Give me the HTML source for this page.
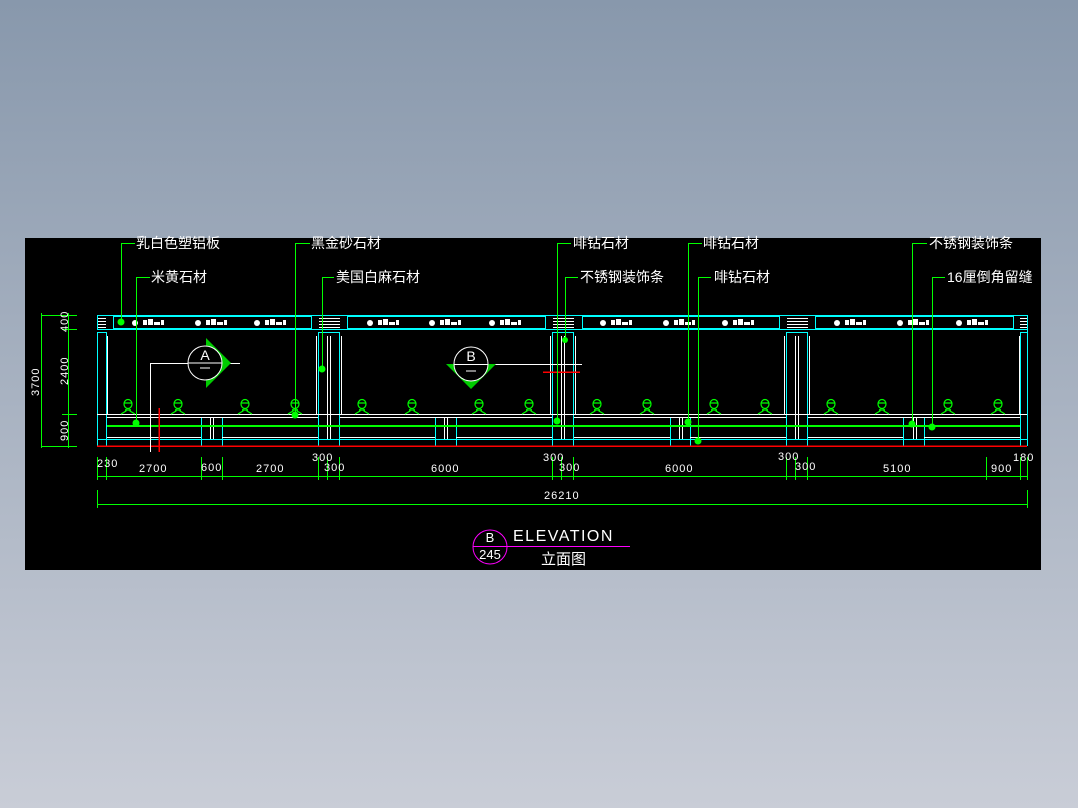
<!DOCTYPE html>
<html><head><meta charset="utf-8"><style>
html,body{margin:0;padding:0;width:1078px;height:808px;overflow:hidden;background:linear-gradient(#8898ac,#c9cdd7);}
svg{position:absolute;left:0;top:0}
text{font-family:"Liberation Sans","Noto Sans CJK SC",sans-serif;fill:#fff}
.c{shape-rendering:crispEdges}
</style></head><body>
<svg width="1078" height="808" viewBox="0 0 1078 808">
<defs>
<g id="p" fill="none" stroke="#0f0" stroke-width="1.2"><ellipse cx="0" cy="-10" rx="4" ry="4.5"/><path d="M-2 -5 L-2 -3 L-7 0 M2 -5 L2 -3 L7 0 M-3 -4 L3 -4 M-4 -11 H4"/></g>
<g id="o"><circle cx="0" cy="0" r="3" fill="#fff"/><rect x="8" y="-3" width="4" height="5" fill="#fff"/><rect x="13" y="-4" width="5" height="6" fill="#fff"/><rect x="19" y="-1" width="6" height="3" fill="#fff"/><rect x="26" y="-3" width="3" height="5" fill="#fff"/></g>
</defs>
<rect x="25" y="238" width="1016" height="332" fill="#000"/>
<g fill="none" stroke-width="1" class="c">
<rect x="97.5" y="315.5" width="930" height="14" stroke="#0ff"/>
<rect x="113.5" y="316.5" width="198" height="12" stroke="#0ff"/>
<rect x="347.5" y="316.5" width="198" height="12" stroke="#0ff"/>
<rect x="582.5" y="316.5" width="197" height="12" stroke="#0ff"/>
<rect x="815.5" y="316.5" width="198" height="12" stroke="#0ff"/>
<path stroke="#fff" d="M98 318.5h8M98 321.5h8M98 324.5h8M98 327.5h8 M319 318.5h21M319 321.5h21M319 324.5h21M319 327.5h21 M553 318.5h21M553 321.5h21M553 324.5h21M553 327.5h21 M787 318.5h21M787 321.5h21M787 324.5h21M787 327.5h21 M1020 318.5h7M1020 321.5h7M1020 324.5h7M1020 327.5h7"/>
<path stroke="#0ff" d="M97.5 332V446 M97.5 332.5H106 M106.5 332V414 M318.5 332V446M339.5 332V446M318 332.5H340 M552.5 332V446M573.5 332V446M552 332.5H574 M786.5 332V446M807.5 332V446M786 332.5H808 M1020.5 332V446M1027.5 315V446M1020 332.5H1027"/>
<path stroke="#fff" d="M107.5 336V414 M316.5 336V414 M341.5 336V414 M327.5 336V439 M330.5 336V439 M550.5 336V414 M575.5 336V414 M561.5 336V439 M564.5 336V439 M784.5 336V414 M809.5 336V414 M795.5 336V439 M798.5 336V439 M1019.5 336V414"/>
<path stroke="#0ff" d="M97 414.5H1027 M97 439.5H1027 M106.5 414V446 M201.5 417V446 M222.5 417V446 M435.5 417V446 M456.5 417V446 M670.5 417V446 M690.5 417V446 M903.5 417V446 M924.5 417V446"/>
<path stroke="#fff" d="M107 417.5H318 M340 417.5H552 M574 417.5H786 M808 417.5H1020 M107 437.5H201 M222 437.5H318 M340 437.5H435 M456 437.5H552 M574 437.5H670 M690 437.5H786 M808 437.5H903 M924 437.5H1020 M210.5 417V439M213.5 417V439M444.5 417V439M447.5 417V439M679.5 417V439M682.5 417V439M913.5 417V439M916.5 417V439 M97 414.5H1027"/>
<path stroke="#0f0" stroke-width="2" d="M107 426H1020"/>
<path stroke="#f00" stroke-width="1.5" d="M97 446H1027 M159 408V452 M543 372H580"/>
<path stroke="#fff" d="M150.5 363V452 M150 363.5H240 M465 364.5H582"/>
</g>
<g>
<use href="#o" x="135" y="323"/><use href="#o" x="198" y="323"/><use href="#o" x="257" y="323"/>
<use href="#o" x="370" y="323"/><use href="#o" x="432" y="323"/><use href="#o" x="492" y="323"/>
<use href="#o" x="603" y="323"/><use href="#o" x="666" y="323"/><use href="#o" x="725" y="323"/>
<use href="#o" x="837" y="323"/><use href="#o" x="900" y="323"/><use href="#o" x="959" y="323"/>
</g>
<g>
<use href="#p" x="128" y="414"/><use href="#p" x="178" y="414"/><use href="#p" x="245" y="414"/><use href="#p" x="295" y="414"/>
<use href="#p" x="362" y="414"/><use href="#p" x="412" y="414"/><use href="#p" x="479" y="414"/><use href="#p" x="529" y="414"/>
<use href="#p" x="597" y="414"/><use href="#p" x="647" y="414"/><use href="#p" x="714" y="414"/><use href="#p" x="765" y="414"/>
<use href="#p" x="831" y="414"/><use href="#p" x="882" y="414"/><use href="#p" x="948" y="414"/><use href="#p" x="998" y="414"/>
</g>
<polygon points="206,338 231,363 206,388" fill="#0c0"/>
<circle cx="205" cy="363" r="17" fill="#000" stroke="#fff"/>
<path d="M188 363H222 M200 368H210" stroke="#fff"/>
<text x="205" y="360" font-size="14" text-anchor="middle">A</text>
<polygon points="446,364 471,389 496,364" fill="#0c0"/>
<circle cx="471" cy="364" r="17" fill="#000" stroke="#fff"/>
<path d="M454 364.5H488 M466 371H476" stroke="#fff"/>
<text x="471" y="361" font-size="14" text-anchor="middle">B</text>
<g stroke="#0f0" fill="none" class="c">
<path d="M121.5 322V243.5H135 M136.5 423V277.5H150 M295.5 415V243.5H310 M322.5 369V277.5H334 M557.5 421V243.5H571 M565.5 340V277.5H578 M688.5 422V243.5H702 M698.5 441V277.5H711 M912.5 424V243.5H927 M932.5 427V277.5H945"/>
</g>
<g fill="#0f0"><circle cx="121" cy="322" r="3.5"/><circle cx="136" cy="423" r="3.5"/><circle cx="295" cy="415" r="3.5"/><circle cx="322" cy="369" r="3.5"/><circle cx="557" cy="421" r="3.5"/><circle cx="565" cy="340" r="3"/><circle cx="688" cy="422" r="3.5"/><circle cx="698" cy="441" r="3.5"/><circle cx="912" cy="424" r="3.5"/><circle cx="932" cy="427" r="3.5"/></g>
<g font-size="14">
<text x="136" y="248">乳白色塑铝板</text><text x="151" y="282">米黄石材</text>
<text x="311" y="248">黑金砂石材</text><text x="336" y="282">美国白麻石材</text>
<text x="573" y="248">啡钻石材</text><text x="580" y="282">不锈钢装饰条</text>
<text x="703" y="248">啡钻石材</text><text x="714" y="282">啡钻石材</text>
<text x="929" y="248">不锈钢装饰条</text><text x="947" y="282">16厘倒角留缝</text>
</g>
<g stroke="#0f0" fill="none" class="c">
<path d="M41 315.5H73 M41 446.5H73 M62 315.5H77 M62 329.5H77 M62 414.5H77 M62 446.5H77 M41.5 313V448"/>
<path d="M68.5 313V448"/>
<path d="M97 476.5H1027 M97.5 457V480 M106.5 457V480 M201.5 457V480 M222.5 457V480 M318.5 457V480 M327.5 457V480 M339.5 457V480 M552.5 457V480 M561.5 457V480 M573.5 457V480 M786.5 457V480 M795.5 457V480 M807.5 457V480 M986.5 457V480 M1020.5 457V480 M1027.5 457V480"/>
<path d="M97 504.5H1027 M97.5 490V508 M1027.5 490V508"/>
</g>
<g font-size="11" style="letter-spacing:1px">
<text transform="translate(39,396) rotate(-90)">3700</text>
<text transform="translate(68,332) rotate(-90)">400</text>
<text transform="translate(68,385) rotate(-90)">2400</text>
<text transform="translate(68,441) rotate(-90)">900</text>
<text x="97" y="467">230</text><text x="139" y="472">2700</text><text x="201" y="471">600</text><text x="256" y="472">2700</text>
<text x="312" y="461">300</text><text x="324" y="471">300</text><text x="431" y="472">6000</text>
<text x="543" y="461">300</text><text x="559" y="471">300</text><text x="665" y="472">6000</text>
<text x="778" y="460">300</text><text x="795" y="470">300</text><text x="883" y="472">5100</text><text x="991" y="472">900</text><text x="1013" y="461">180</text>
<text x="544" y="499">26210</text>
</g>
<circle cx="490" cy="547" r="17" fill="none" stroke="#f0f"/>
<path d="M473 546.5H630" stroke="#f0f"/>
<text x="490" y="542" font-size="13" text-anchor="middle">B</text>
<text x="490" y="559" font-size="13" text-anchor="middle">245</text>
<text x="513" y="541" font-size="16" style="letter-spacing:1.5px">ELEVATION</text>
<text x="541" y="564" font-size="15">立面图</text>
</svg>
</body></html>
